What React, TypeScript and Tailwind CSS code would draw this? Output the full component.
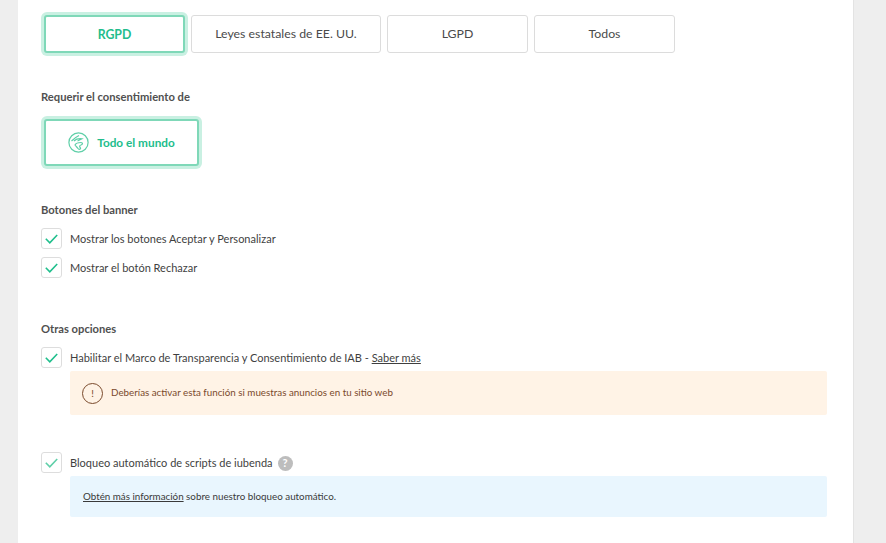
import type React from 'react';

const font = { fontFamily: 'Lato, "Liberation Sans", sans-serif' };

const Check = ({ light }: { light?: boolean }) => (
  <svg width="13" height="10" viewBox="0 0 13 10" fill="none" stroke={light ? '#5fcfa8' : '#1fbf8c'} strokeWidth="1.6">
    <path d="M0.8 4.8 L4.8 8.8 L12.2 1" />
  </svg>
);

const Row = ({ children, light }: { children: React.ReactNode; light?: boolean }) => (
  <div className="flex items-center h-[21px] gap-[8px]">
    <span className="w-[21px] h-[21px] shrink-0 flex items-center justify-center bg-white border border-[#dddddd] rounded-[3px]">
      <Check light={light} />
    </span>
    <span className="flex items-center pt-[1px] text-[11px] text-[#3f3f3f]">{children}</span>
  </div>
);

const Heading = ({ children }: { children: React.ReactNode }) => (
  <h3 className="text-[11.2px] leading-[14px] font-bold text-[#505050]">{children}</h3>
);

const Tab = ({ label, width, active }: { label: string; width: string; active?: boolean }) => (
  <button
    className={
      active
        ? `${width} h-[38px] pt-[2px] rounded-[3px] bg-white border-2 border-[#7fd8b8] ring-[3px] ring-[#c9f0e2] text-[12.3px] font-bold text-[#22bd8c]`
        : `${width} h-[38px] pt-[1px] rounded-[3px] bg-white border border-[#dcdcdc] text-[12.3px] text-[#4a4a4a]`
    }
  >
    {label}
  </button>
);

export default function App() {
  return (
    <div style={font} className="h-[543px] overflow-hidden bg-[#eeeeee]">
      <div className="ml-[18px] w-[836px] h-[543px] bg-white border-r border-[#e3e3e3] pl-[23px] pr-[26px] pt-[15px]">
        <div className="flex gap-[6px] pl-[3px]">
          <Tab label="RGPD" width="w-[141px]" active />
          <Tab label="Leyes estatales de EE. UU." width="w-[190px]" />
          <Tab label="LGPD" width="w-[141px]" />
          <Tab label="Todos" width="w-[141px]" />
        </div>

        <div className="mt-[37px]">
          <Heading>Requerir el consentimiento de</Heading>
        </div>
        <div className="mt-[15px] pl-[3px]">
          <button className="w-[155px] h-[47px] flex items-center justify-center gap-[8px] rounded-[3px] bg-white border-2 border-[#7fd8b8] ring-[3px] ring-[#c9f0e2] text-[11.8px] font-bold text-[#22bd8c]">
            <svg width="21" height="21" viewBox="0 0 21 21" fill="none" stroke="#5fcfa8" strokeWidth="1.2">
              <circle cx="10.5" cy="10.5" r="9.6" />
              <path d="M3.5 9 C6 6.5 8 5 11 3.5 M6 9 C8 7 11 6.5 14 6.8 C12 8 11 8.5 9.5 9 M7 13 C8 11 10 10.5 13 10.5 C15 10.5 15 12.5 13 13 C11 13.5 11.5 15 12.5 16 C13 17 11 18 10 16.5 C9 15 8 14.5 7 13 Z" />
            </svg>
            Todo el mundo
          </button>
        </div>

        <div className="mt-[37px]">
          <Heading>Botones del banner</Heading>
        </div>
        <div className="mt-[11px] flex flex-col gap-[8px]">
          <Row>Mostrar los botones Aceptar y Personalizar</Row>
          <Row>Mostrar el botón Rechazar</Row>
        </div>

        <div className="mt-[44px]">
          <Heading>Otras opciones</Heading>
        </div>
        <div className="mt-[11px]">
          <Row>
            Habilitar el Marco de Transparencia y Consentimiento de IAB -&nbsp;<span className="underline">Saber más</span>
          </Row>
        </div>
        <div className="ml-[29px] mt-[3px] h-[44px] flex items-center gap-[8px] pl-[12px] bg-[#fff3e6] rounded-[2px] text-[9.8px] text-[#7a4a2c]">
          <span className="w-[21px] h-[21px] flex items-center justify-center rounded-full border border-[#7a4a2c] text-[10px]">!</span>
          <span className="-mt-[1px]">Deberías activar esta función si muestras anuncios en tu sitio web</span>
        </div>

        <div className="mt-[37px]">
          <Row light>
            Bloqueo automático de scripts de iubenda
            <span className="ml-[5px] w-[15px] h-[15px] flex items-center justify-center rounded-full bg-[#bdbdbd] text-white text-[11px] font-bold">?</span>
          </Row>
        </div>
        <div className="ml-[29px] mt-[3px] h-[41px] flex items-center pl-[13px] bg-[#e9f6fe] rounded-[2px] text-[9.8px] text-[#3a3a3a]">
          <span>
            <span className="underline">Obtén más información</span> sobre nuestro bloqueo automático.
          </span>
        </div>
      </div>
    </div>
  );
}
